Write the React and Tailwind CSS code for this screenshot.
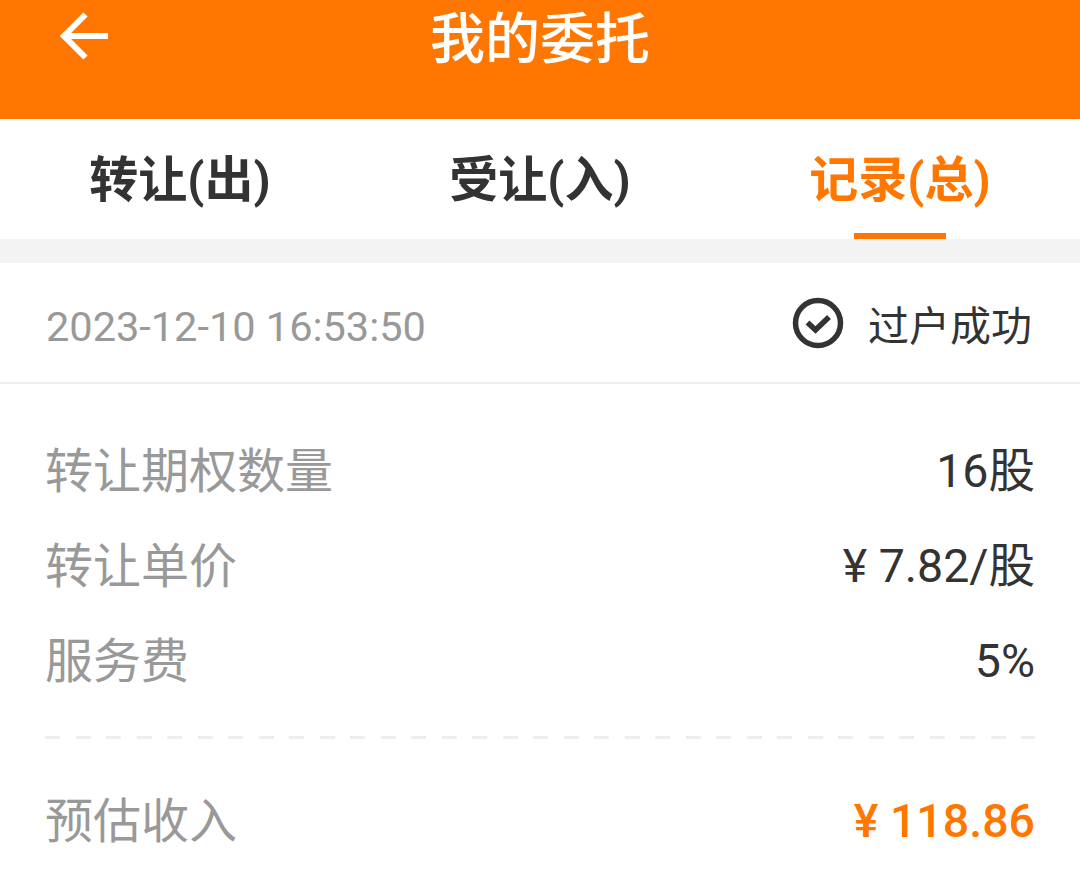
import React from 'react';

const font = 'font-["Roboto","Noto_Sans_CJK_SC",sans-serif]';

const Row = ({ label, value }) => (
    <div className="flex h-[95px] items-center justify-between">
        <span className="text-[48px] text-[#999999]">{label}</span>
        <span className="text-[46.5px] text-[#333333]">{value}</span>
    </div>
);

export default function App() {
    return (
        <div className={`h-[869px] w-[1080px] overflow-hidden bg-white ${font}`}>
            {/* Header */}
            <div className="relative flex h-[119px] items-start justify-center bg-[#ff7700] pt-[6px]">
                <svg className="absolute left-[56px] top-[10px]" width="56" height="56" viewBox="0 0 56 56" fill="none" stroke="white" strokeWidth="6">
                    <path d="M52 26H10M29.5 4.5L8 26L29.5 47.5" />
                </svg>
                <span className="text-[55px] font-medium leading-[66px] text-white">我的委托</span>
            </div>

            {/* Tabs */}
            <div className="flex h-[120px]">
                <div className="flex w-[360px] items-center justify-center pt-[4px] text-[49px] font-bold text-[#333333]">转让(出)</div>
                <div className="flex w-[360px] items-center justify-center pt-[4px] text-[49px] font-bold text-[#333333]">受让(入)</div>
                <div className="relative flex w-[360px] items-center justify-center pt-[4px] text-[49px] font-bold text-[#ff7700]">
                    记录(总)
                    <div className="absolute bottom-0 left-[134px] h-[6px] w-[92px] bg-[#ff7700]"></div>
                </div>
            </div>
            <div className="h-[24px] bg-[#f3f3f3]"></div>

            {/* Card header */}
            <div className="flex h-[121px] items-center justify-between border-b-2 border-[#eeeeee] pl-[46px] pr-[48px] pt-[10px]">
                <span className="text-[41.5px] text-[#999999]">2023-12-10 16:53:50</span>
                <div className="flex items-center gap-[24px]">
                    <svg className="mb-[10px]" width="52" height="52" viewBox="0 0 52 52" fill="none" stroke="#333333" strokeWidth="5.5">
                        <circle cx="26" cy="26" r="22.5" />
                        <path d="M15.5 25.5L23.5 33L37 20" />
                    </svg>
                    <span className="text-[41px] text-[#333333]">过户成功</span>
                </div>
            </div>

            {/* Details */}
            <div className="px-[45px] pt-[40px]">
                <Row label="转让期权数量" value="16股" />
                <Row label="转让单价" value="¥ 7.82/股" />
                <Row label="服务费" value="5%" />
                <div className="mt-[27px] h-[3px] bg-[repeating-linear-gradient(90deg,#eeeeee_0,#eeeeee_15px,transparent_15px,transparent_30.5px)]"></div>
                <div className="mt-[35px] flex h-[95px] items-center justify-between">
                    <span className="text-[48px] text-[#999999]">预估收入</span>
                    <span className="text-[46.5px] font-medium text-[#ff7700]">¥ 118.86</span>
                </div>
            </div>
        </div>
    );
}
